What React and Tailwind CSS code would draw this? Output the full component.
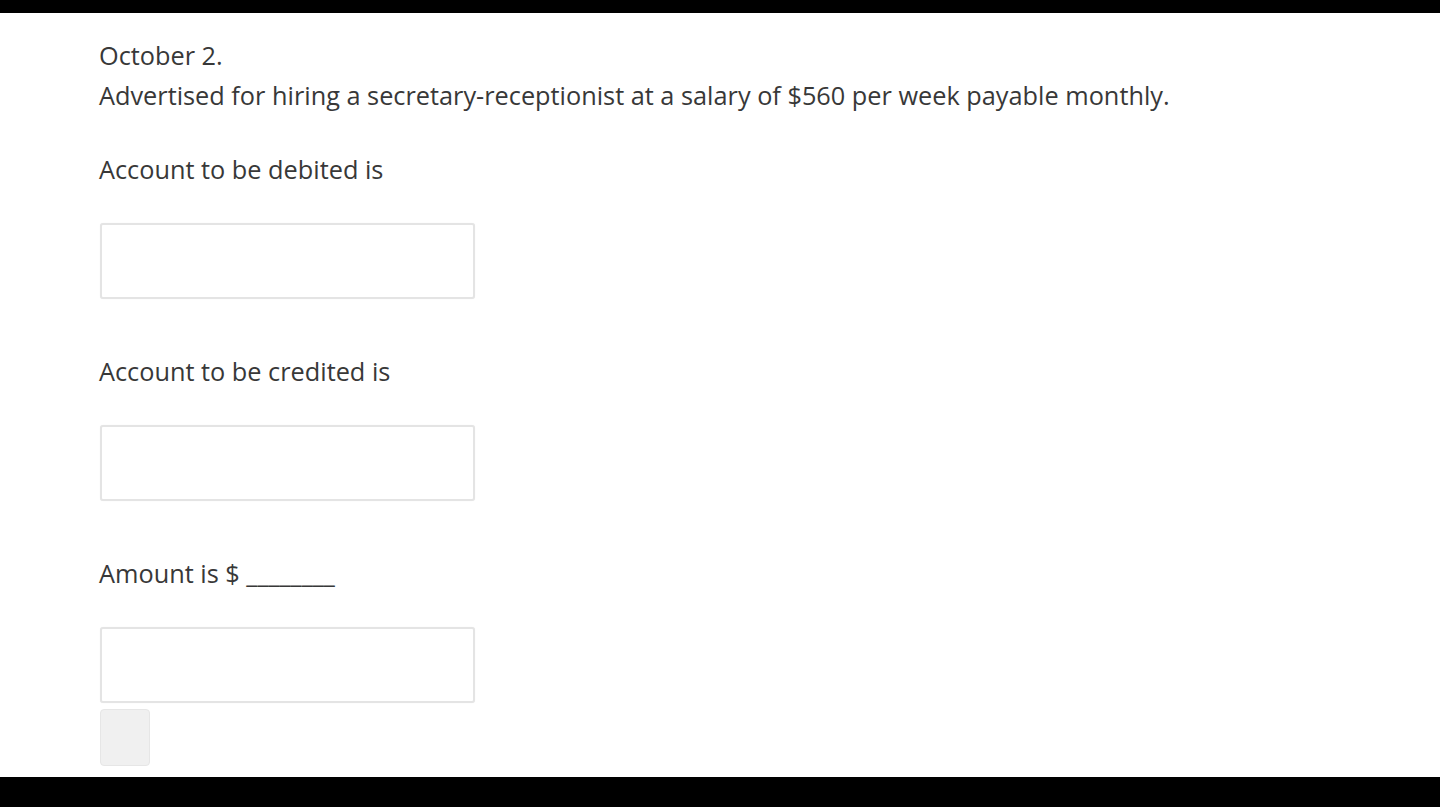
import React from 'react';

const Field = () => (
  <div className="h-[76px] w-[375px] rounded-[3px] border-2 border-[#e4e4e4] bg-white shadow-[0_0_1px_rgba(0,0,0,0.08)]" />
);

const App = () => {
  return (
    <div className="flex h-screen flex-col overflow-hidden bg-black font-['Open_Sans',sans-serif] text-[#383838]">
      <div className="h-[13px] shrink-0 bg-black" />

      <div className="flex-1 overflow-hidden bg-white pl-[99px] pt-[22px]">
        <p className="text-[25.3px] leading-[40px]">October 2.</p>
        <p className="text-[25.3px] leading-[40px]">
          Advertised for hiring a secretary-receptionist at a salary of $560 per week payable monthly.
        </p>

        <p className="mt-[34px] text-[25.3px] leading-[40px]">Account to be debited is</p>
        <div className="mt-[34px] pl-px">
          <Field />
        </div>

        <p className="mt-[52px] text-[25.3px] leading-[40px]">Account to be credited is</p>
        <div className="mt-[34px] pl-px">
          <Field />
        </div>

        <p className="mt-[52px] text-[25.3px] leading-[40px]">Amount is $ ________</p>
        <div className="mt-[34px] pl-px">
          <Field />
        </div>

        <div className="mt-[6px] pl-px">
          <button
            type="button"
            className="block h-[57px] w-[50px] rounded-[4px] border border-[#e6e6e6] bg-[#f0f0f0]"
          />
        </div>
      </div>

      <div className="h-[30px] shrink-0 bg-black" />
    </div>
  );
};

export default App;
